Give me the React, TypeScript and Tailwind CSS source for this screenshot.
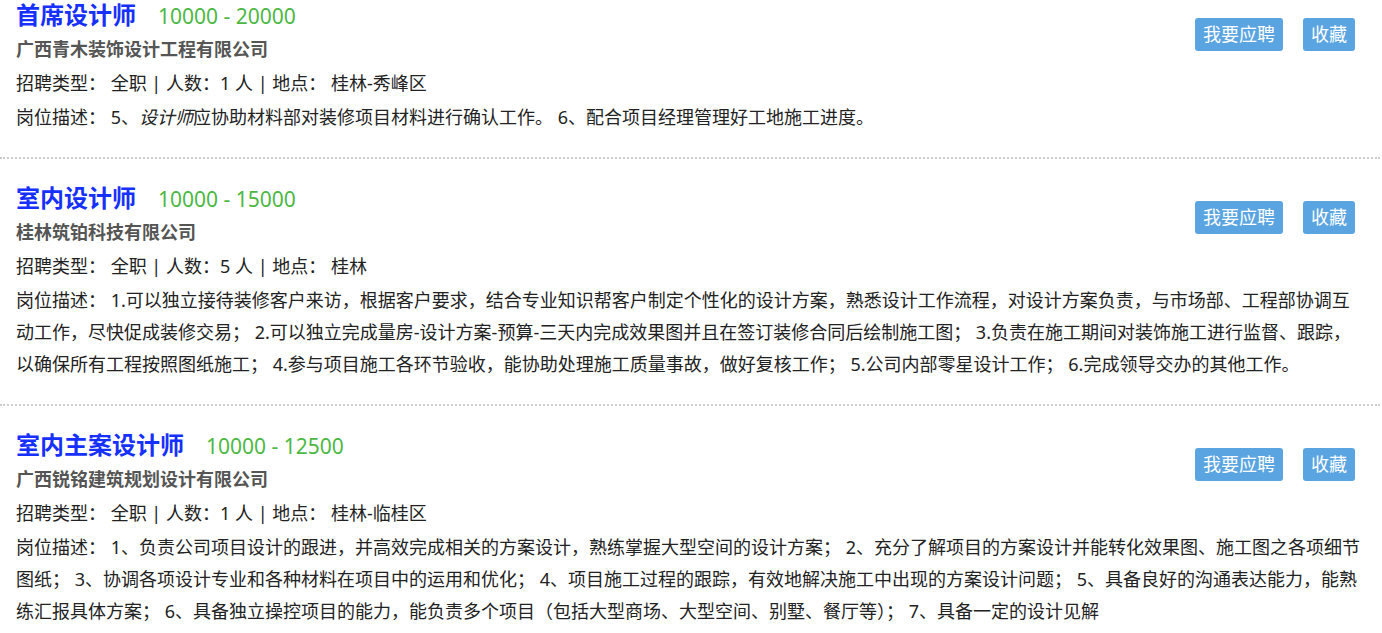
import React from 'react';

interface Job {
  title: string;
  salary: string;
  company: string;
  count: number;
  place: string;
  desc: React.ReactNode;
}

const jobs: Job[] = [
  {
    title: '首席设计师',
    salary: '10000 - 20000',
    company: '广西青木装饰设计工程有限公司',
    count: 1,
    place: '桂林-秀峰区',
    desc: (
      <>
        5、<em>设计师</em>应协助材料部对装修项目材料进行确认工作。 6、配合项目经理管理好工地施工进度。
      </>
    ),
  },
  {
    title: '室内设计师',
    salary: '10000 - 15000',
    company: '桂林筑铂科技有限公司',
    count: 5,
    place: '桂林',
    desc: '1.可以独立接待装修客户来访，根据客户要求，结合专业知识帮客户制定个性化的设计方案，熟悉设计工作流程，对设计方案负责，与市场部、工程部协调互动工作，尽快促成装修交易； 2.可以独立完成量房-设计方案-预算-三天内完成效果图并且在签订装修合同后绘制施工图； 3.负责在施工期间对装饰施工进行监督、跟踪，以确保所有工程按照图纸施工； 4.参与项目施工各环节验收，能协助处理施工质量事故，做好复核工作； 5.公司内部零星设计工作； 6.完成领导交办的其他工作。',
  },
  {
    title: '室内主案设计师',
    salary: '10000 - 12500',
    company: '广西锐铭建筑规划设计有限公司',
    count: 1,
    place: '桂林-临桂区',
    desc: '1、负责公司项目设计的跟进，并高效完成相关的方案设计，熟练掌握大型空间的设计方案； 2、充分了解项目的方案设计并能转化效果图、施工图之各项细节图纸； 3、协调各项设计专业和各种材料在项目中的运用和优化； 4、项目施工过程的跟踪，有效地解决施工中出现的方案设计问题； 5、具备良好的沟通表达能力，能熟练汇报具体方案； 6、具备独立操控项目的能力，能负责多个项目（包括大型商场、大型空间、别墅、餐厅等）； 7、具备一定的设计见解',
  },
];

function JobItem({ job, first }: { job: Job; first: boolean }) {
  return (
    <div
      className={
        'border-b-2 border-dotted border-[#cccccc] pl-4 pr-4 pb-6 ' +
        (first ? 'pt-0' : 'pt-6')
      }
    >
      <div className="float-right mt-[18px] mr-[9px] flex gap-5">
        <button className="h-[33px] px-2 rounded-[3px] bg-[#5aa5e1] text-white text-[18px] leading-[33px]">
          我要应聘
        </button>
        <button className="h-[33px] px-2 rounded-[3px] bg-[#5aa5e1] text-white text-[18px] leading-[33px]">
          收藏
        </button>
      </div>
      <div className="h-[30px] leading-[30px] flex items-baseline">
        <span className="text-[24px] font-bold text-[#1630ff]">{job.title}</span>
        <span className="ml-[22px] text-[21px] text-[#4cb843]">{job.salary}</span>
      </div>
      <div className="mt-[3px] leading-[32px] font-bold text-[#555555]">{job.company}</div>
      <div className="mt-[2px] leading-[32px] text-[#222222]">
        招聘类型： 全职 | 人数：{job.count} 人 | 地点： {job.place}
      </div>
      <div className="mt-[2px] leading-[32px] text-[#222222]">
        岗位描述： {job.desc}
      </div>
    </div>
  );
}

export default function App() {
  return (
    <div
      className="w-[1380px] bg-white text-[18px]"
      style={{ fontFamily: '"Noto Sans", "Noto Sans CJK SC", sans-serif' }}
    >
      {jobs.map((j, i) => (
        <JobItem key={i} job={j} first={i === 0} />
      ))}
    </div>
  );
}
